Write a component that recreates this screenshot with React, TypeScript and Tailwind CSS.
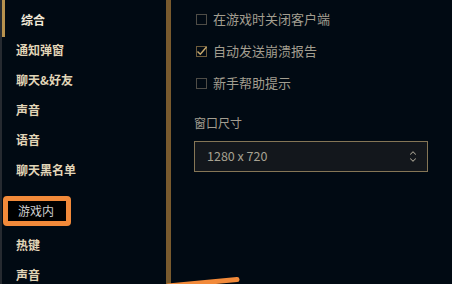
import { ChevronDown, ChevronUp } from 'lucide-react';

const menuTop = ['通知弹窗', '聊天&好友', '声音', '语音', '聊天黑名单'];

const options = [
  { label: '在游戏时关闭客户端', checked: false },
  { label: '自动发送崩溃报告', checked: true },
  { label: '新手帮助提示', checked: false },
];

function Checkbox({ checked }: { checked: boolean }) {
  return (
    <div
      className={`w-[11px] h-[11px] border flex items-center justify-center ${
        checked ? 'border-[#6e5c3c]' : 'border-[#4f4d47]'
      }`}
    >
      {checked && (
        <svg width="11" height="11" viewBox="0 0 11 11" className="overflow-visible">
          <path d="M1.5 5.5 L4.3 8.3 L10.5 1" fill="none" stroke="#c8aa6e" strokeWidth="1.4" />
        </svg>
      )}
    </div>
  );
}

function MenuItem({ label }: { label: string }) {
  return (
    <div className="shrink-0 h-[30px] flex items-center pl-[11px] text-[12px] font-bold text-[#e2d6b8]">
      {label}
    </div>
  );
}

export default function App() {
  return (
    <div className="relative w-[452px] h-[284px] overflow-hidden bg-[#010a13] flex font-['Noto_Sans_CJK_SC','Noto_Sans',sans-serif]">
      {/* sidebar */}
      <div className="w-[166px] h-full flex shrink-0">
        <div className="w-[2px] h-full bg-[#262a30]" />
        <div className="w-[3px] h-full">
          <div className="h-[37px] bg-[#b8924e]" />
        </div>
        <div className="flex-1 flex flex-col">
          <div className="shrink-0 h-[35px] pt-[5px] flex items-center pl-[16px] text-[12px] font-bold text-[#f0e8d8]">
            综合
          </div>
          {menuTop.map((m) => (
            <MenuItem key={m} label={m} />
          ))}
          <div className="shrink-0 mt-[11px] -ml-[2px] w-[68px] h-[30px] border-[5px] border-[#f28a3a] rounded-[4px] bg-black flex items-center pl-[10px] text-[12px] text-[#cfcfcf]">
            游戏内
          </div>
          <div className="shrink-0 mt-[4px]">
            <MenuItem label="热键" />
            <MenuItem label="声音" />
          </div>
        </div>
      </div>

      {/* divider */}
      <div className="w-[5px] h-full shrink-0 bg-[#785a2e]" />

      {/* settings panel */}
      <div className="flex-1 h-full pl-[23px] pt-[3px] flex flex-col">
        {options.map((o) => (
          <div key={o.label} className="shrink-0 h-[32px] ml-[2px] flex items-center gap-[6px] text-[13px] text-[#a39e90]">
            <Checkbox checked={o.checked} />
            <span>{o.label}</span>
          </div>
        ))}
        <div className="shrink-0 mt-[16px] h-[16px] flex items-center text-[12px] text-[#a39e90]">窗口尺寸</div>
        <div className="shrink-0 mt-[10px] w-[234px] h-[31px] border border-[#857656] bg-[#13171c] flex items-center justify-between pl-[12px] pr-[9px]">
          <span className="text-[12.5px] text-[#a7a292]">1280 x 720</span>
          <div className="flex flex-col items-center text-[#a7a292] -space-y-[3px]">
            <ChevronUp size={10} strokeWidth={2.5} />
            <ChevronDown size={10} strokeWidth={2.5} />
          </div>
        </div>
      </div>

      {/* annotation stroke */}
      <svg className="absolute left-0 top-0 pointer-events-none" width="452" height="284">
        <path d="M168 286 L237 279.5" stroke="#f28a3a" strokeWidth="5" strokeLinecap="round" fill="none" />
      </svg>
    </div>
  );
}
